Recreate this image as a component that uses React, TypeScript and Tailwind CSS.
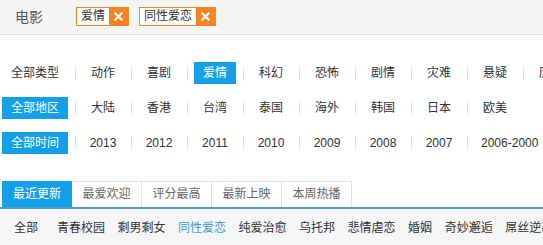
import { Fragment } from 'react';

const font = { fontFamily: '"Liberation Sans", "Noto Sans CJK SC", sans-serif' };

const filterRows: { items: string[]; active: string }[] = [
  { items: ['全部类型', '动作', '喜剧', '爱情', '科幻', '恐怖', '剧情', '灾难', '悬疑', '历史'], active: '爱情' },
  { items: ['全部地区', '大陆', '香港', '台湾', '泰国', '海外', '韩国', '日本', '欧美'], active: '全部地区' },
  { items: ['全部时间', '2013', '2012', '2011', '2010', '2009', '2008', '2007', '2006-2000'], active: '全部时间' },
];

const tabs = ['最近更新', '最爱欢迎', '评分最高', '最新上映', '本周热播'];
const subTags = ['青春校园', '剩男剩女', '同性爱恋', '纯爱治愈', '乌托邦', '悲情虐恋', '婚姻', '奇妙邂逅', '屌丝逆袭'];

function SelectedTag({ label }: { label: string }) {
  return (
    <div className="flex h-[19px] border border-[#f5831f]">
      <span className="bg-white px-[4px] text-[12px] leading-[17px] text-[#333]">{label}</span>
      <span className="flex w-[19px] items-center justify-center bg-[#f5831f]">
        <svg width="9" height="9" viewBox="0 0 10 10">
          <path d="M1.5 1.5 L8.5 8.5 M8.5 1.5 L1.5 8.5" stroke="#fff" strokeWidth="2.4" strokeLinecap="square" />
        </svg>
      </span>
    </div>
  );
}

export default function App() {
  return (
    <div className="h-[245px] w-[543px] overflow-hidden bg-white" style={font}>
      <div className="flex h-[35px] items-center border-b border-[#e2e2e2] bg-[#f5f5f5]">
        <span className="ml-[15px] w-[61px] text-[14px] text-[#555]">电影</span>
        <div className="flex gap-[10px] pb-[2px]">
          <SelectedTag label="爱情" />
          <SelectedTag label="同性爱恋" />
        </div>
      </div>

      <div className="mt-[27px] flex flex-col gap-[13px] pl-[2px]">
        {filterRows.map((row) => (
          <div key={row.items[0]} className="flex items-center whitespace-nowrap">
            {row.items.map((item, index) => (
              <Fragment key={item}>
                {index > 0 ? <span className="ml-[7px] mr-[6px] h-[12px] w-px shrink-0 bg-[#e0e0e0]" /> : null}
                <span
                  className={[
                    'h-[22px] min-w-[42px] shrink-0 text-center text-[12px] leading-[22px]',
                    index === 0 ? 'px-[9px]' : 'px-[7px]',
                    item === row.active ? 'bg-[#13a0e8] text-white' : 'text-[#333]',
                  ].join(' ')}
                >
                  {item}
                </span>
              </Fragment>
            ))}
          </div>
        ))}
      </div>

      <div className="mt-[27px] flex border-b-2 border-[#4b9fc2] pl-[2px]">
        {tabs.map((tab, index) => (
          <span
            key={tab}
            className={
              index === 0
                ? 'h-[26px] w-[70px] bg-[#13a0e8] text-center text-[12px] leading-[26px] text-white'
                : 'h-[26px] w-[70px] border-r border-t border-[#e0e0e0] bg-white text-center text-[12px] leading-[25px] text-[#666]'
            }
          >
            {tab}
          </span>
        ))}
      </div>

      <div className="flex h-[38px] items-center whitespace-nowrap bg-[#f6f6f6] pl-[14px] text-[12px] text-[#333]">
        <span className="mr-[19px]">全部</span>
        <div className="flex gap-[12.5px]">
          {subTags.map((tag) => (
            <span key={tag} className={tag === '同性爱恋' ? 'text-[#3a9dd3]' : ''}>
              {tag}
            </span>
          ))}
        </div>
      </div>
    </div>
  );
}
